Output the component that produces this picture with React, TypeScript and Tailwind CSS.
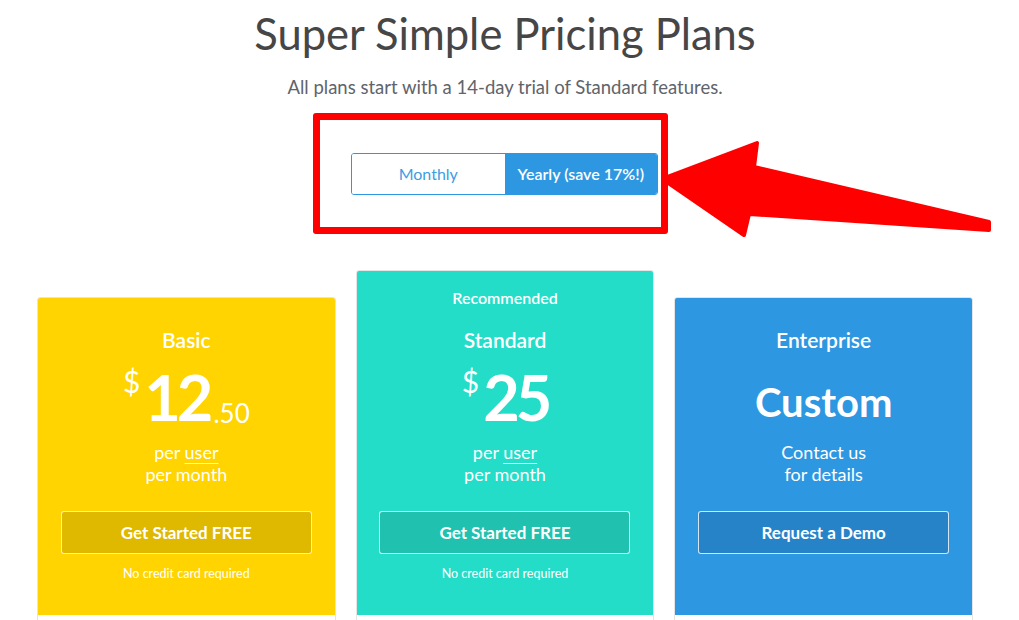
import React from "react";

type Plan = {
  name: string;
  bg: string;
  btn: string;
  cta: string;
  recommended?: boolean;
  kind: "price" | "custom";
  whole?: string;
  cents?: string;
  note?: boolean;
};

const plans: Plan[] = [
  { name: "Basic", bg: "bg-[#ffd400]", btn: "bg-[#dfb800]", cta: "Get Started FREE", kind: "price", whole: "12", cents: ".50", note: true },
  { name: "Standard", bg: "bg-[#24ddc8]", btn: "bg-[#20c2af]", cta: "Get Started FREE", kind: "price", whole: "25", recommended: true, note: true },
  { name: "Enterprise", bg: "bg-[#2d97e1]", btn: "bg-[#2783c8]", cta: "Request a Demo", kind: "custom" },
];

function PlanCard({ p }: { p: Plan }) {
  return (
    <div className={`overflow-hidden rounded-[3px] border border-[#e4e4e4] ${p.recommended ? "" : "mt-[27px]"}`}>
      <div className={`${p.bg} flex flex-col items-center pb-[33px] text-white`}>
        {p.recommended && (
          <div className="pt-[17px] text-[16px] leading-[20px] font-semibold">Recommended</div>
        )}
        <div className={`${p.recommended ? "pt-[18px]" : "pt-[28px]"} text-[21px] leading-[28px] font-semibold`}>{p.name}</div>
        {p.kind === "price" ? (
          <div className="mt-[8px] flex h-[62px] items-end">
            <span className="mb-[28px] mr-[4px] text-[30px] leading-none">$</span>
            <span className="text-[63px] leading-[54px] font-bold tracking-[-4px]">{p.whole}</span>
            {p.cents && <span className="ml-[4px] text-[26px] leading-[22px]">{p.cents}</span>}
          </div>
        ) : (
          <div className="mt-[8px] flex h-[62px] items-center pt-[18px] text-[40px] leading-none font-bold">Custom</div>
        )}
        <div className="mt-[17px] text-[18px] leading-[22px]">
          {p.kind === "price" ? (
            <div className="flex flex-col items-center">
              <span>
                per <span className="underline decoration-1 underline-offset-[4px]">user</span>
              </span>
              <span>per month</span>
            </div>
          ) : (
            <div className="flex flex-col items-center">
              <span>Contact us</span>
              <span>for details</span>
            </div>
          )}
        </div>
        <button
          className={`${p.btn} mt-[26px] h-[43px] w-[251px] rounded-[3px] border border-white/80 text-[17px] font-bold text-white`}
        >
          {p.cta}
        </button>
        <div className="mt-[12px] h-[16px] text-[12.5px] leading-[16px]">{p.note ? "No credit card required" : ""}</div>
      </div>
      <div className="h-[60px] bg-white" />
    </div>
  );
}

export default function App() {
  return (
    <div
      className="relative h-[620px] w-[1019px] overflow-hidden bg-white"
      style={{ fontFamily: "Lato, 'Open Sans', sans-serif" }}
    >
      <div className="ml-[37px] w-[936px]">
        <h1 className="pt-[5px] text-center text-[43.5px] leading-[56px] text-[#464646]">Super Simple Pricing Plans</h1>
        <p className="mt-[15px] text-center text-[18.5px] leading-[22px] text-[#60646b]">
          All plans start with a 14-day trial of Standard features.
        </p>

        <div className="mt-[15px] ml-[276px] w-[355px] rounded-[3px] border-[7px] border-[#ff0000] pt-[33px] pr-[3px] pb-[32px] pl-[31px]">
          <div className="flex h-[42px] w-[307px] overflow-hidden rounded-[3px] border border-[#2d97e1] text-[16px]">
            <div className="flex flex-1 items-center justify-center bg-white text-[#3d9de2]">Monthly</div>
            <div className="flex flex-1 items-center justify-center bg-[#2d97e1] font-semibold text-white">
              Yearly (save 17%!)
            </div>
          </div>
        </div>

        <div className="mt-[36px] grid grid-cols-3 items-start gap-[20px]">
          {plans.map((p) => (
            <PlanCard key={p.name} p={p} />
          ))}
        </div>
      </div>

      <svg className="pointer-events-none absolute top-0 left-0" width="1019" height="620" viewBox="0 0 1019 620">
        <polygon
          points="667,177 757,143 754,167 989,222 989,230 749,214 744,235 667,182"
          fill="#ff0000"
          stroke="#ff0000"
          strokeWidth="4"
          strokeLinejoin="round"
        />
      </svg>
    </div>
  );
}
